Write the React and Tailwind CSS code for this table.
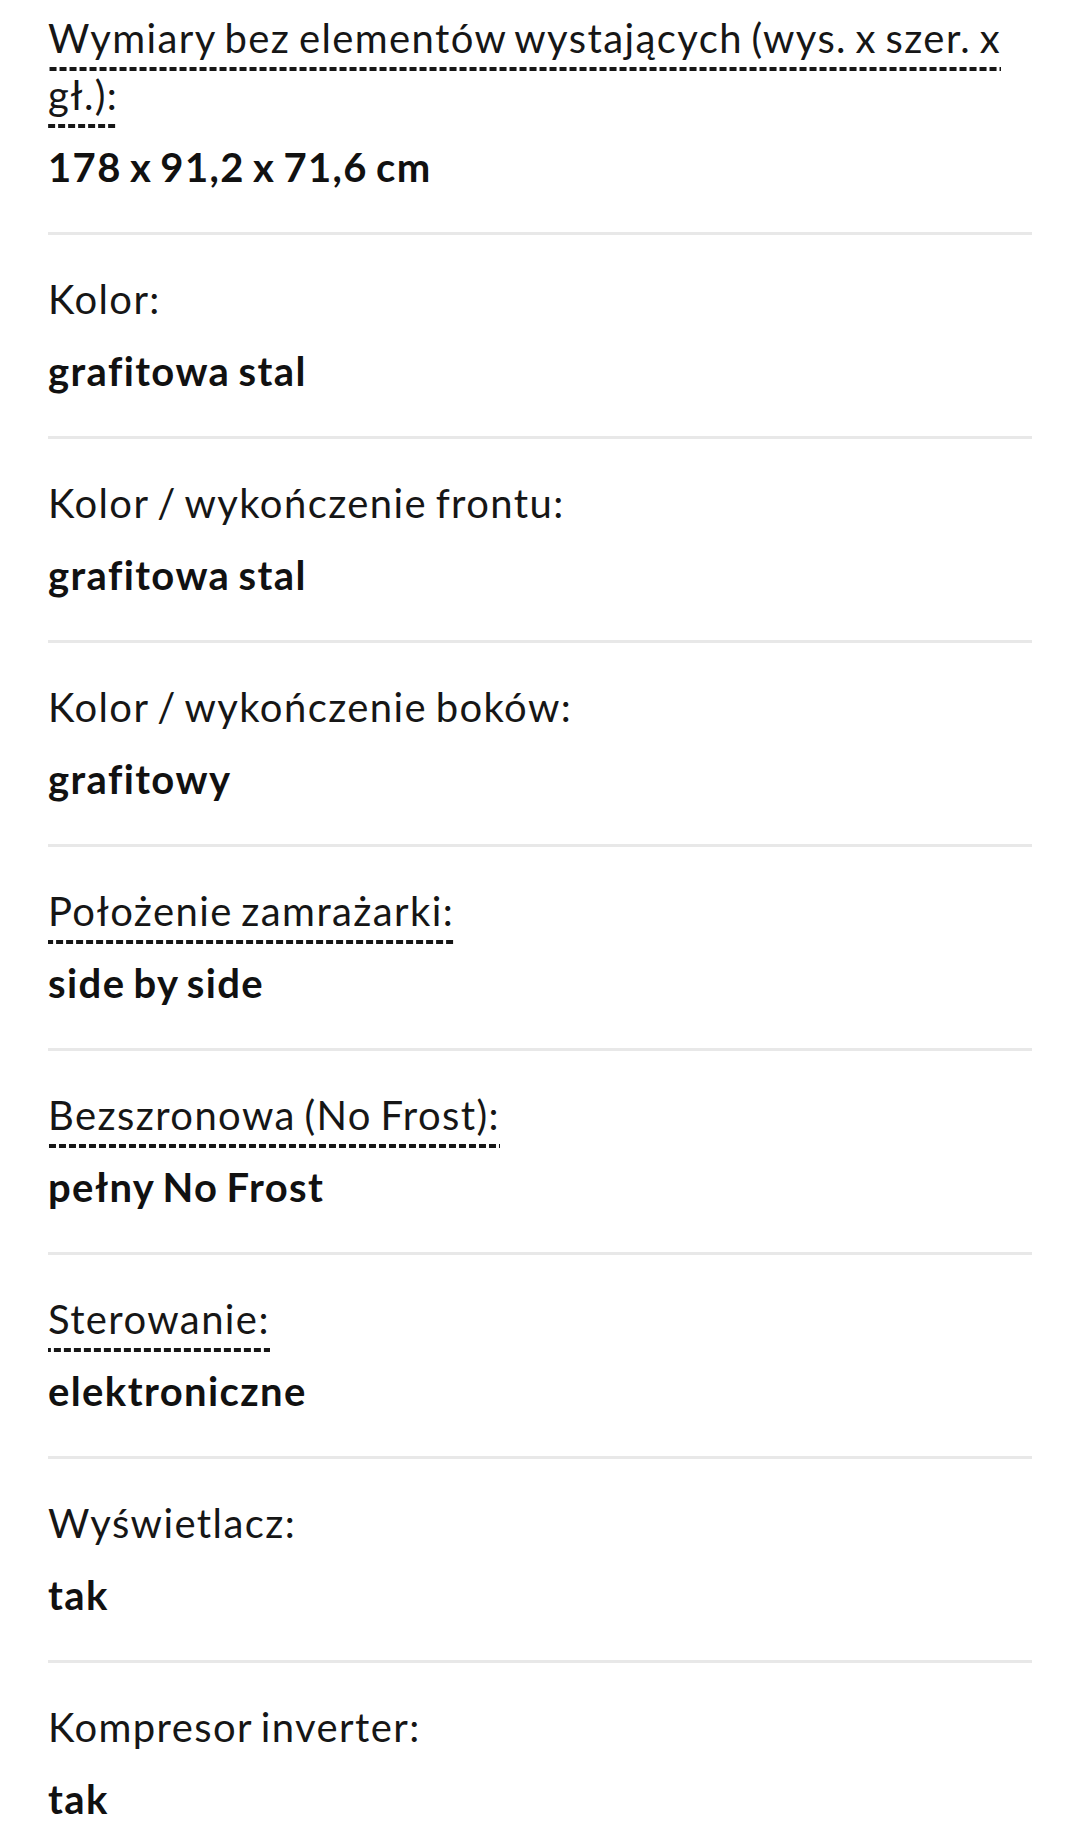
import React from 'react';

const specs = [
  { label: 'Wymiary bez elementów wystających (wys. x szer. x gł.):', value: '178 x 91,2 x 71,6 cm', hint: true },
  { label: 'Kolor:', value: 'grafitowa stal' },
  { label: 'Kolor / wykończenie frontu:', value: 'grafitowa stal' },
  { label: 'Kolor / wykończenie boków:', value: 'grafitowy' },
  { label: 'Położenie zamrażarki:', value: 'side by side', hint: true },
  { label: 'Bezszronowa (No Frost):', value: 'pełny No Frost', hint: true },
  { label: 'Sterowanie:', value: 'elektroniczne', hint: true },
  { label: 'Wyświetlacz:', value: 'tak' },
  { label: 'Kompresor inverter:', value: 'tak' },
];

function SpecRow({ label, value, hint, first }) {
  return (
    <div className={`${first ? 'pt-[10px]' : 'pt-[36px]'} pb-[36px] border-b-[3px] border-[#e8e8e8]`}>
      <div className="text-[40px] leading-[57px] tracking-[0.035em] [word-spacing:-3px] text-[#161616]">
        {hint ? (
          <span className="pb-[9px] box-decoration-clone bg-[linear-gradient(to_right,#161616_7px,transparent_7px)] bg-[length:10px_4px] bg-repeat-x bg-bottom cursor-help">
            {label}
          </span>
        ) : (
          label
        )}
      </div>
      <div className="mt-[15px] text-[40px] leading-[57px] tracking-[0.035em] [word-spacing:-3px] font-bold text-[#111]">
        {value}
      </div>
    </div>
  );
}

export default function App() {
  return (
    <div className="min-h-screen bg-white px-12 font-['Lato',sans-serif]">
      {specs.map((s, i) => (
        <SpecRow key={i} {...s} first={i === 0} />
      ))}
    </div>
  );
}
